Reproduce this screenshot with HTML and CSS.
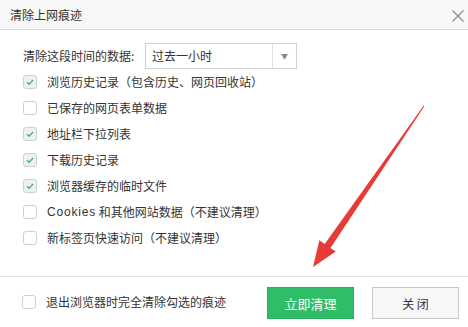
FILE: index.html
```html
<!DOCTYPE html>
<html lang="zh-CN">

<head>
    <meta charset="UTF-8">
    <meta name="viewport" content="width=device-width, initial-scale=1.0">
    <title>清除上网痕迹</title>
    <link rel="stylesheet" href="styles.css">
</head>

<body>
    <div class="dialog">
        <div class="titlebar">
            <span class="title">清除上网痕迹</span>
            <svg class="close" width="12" height="12" viewBox="0 0 12 12">
                <path d="M0.5 0.5 L11.5 11.5 M11.5 0.5 L0.5 11.5" stroke="#8a8a8a" stroke-width="1.1" fill="none"/>
            </svg>
        </div>

        <div class="content">
            <div class="range">
                <span class="range-label">清除这段时间的数据:</span>
                <div class="select">
                    <span class="select-text">过去一小时</span>
                    <span class="select-btn">▼</span>
                </div>
            </div>

            <div class="row"><span class="box checked"><svg viewBox="0 0 14 14"><path d="M3.5 7.2 L6 9.6 L10.6 4.6" /></svg></span>浏览历史记录（包含历史、网页回收站）</div>
            <div class="row"><span class="box"></span>已保存的网页表单数据</div>
            <div class="row"><span class="box checked"><svg viewBox="0 0 14 14"><path d="M3.5 7.2 L6 9.6 L10.6 4.6" /></svg></span>地址栏下拉列表</div>
            <div class="row"><span class="box checked"><svg viewBox="0 0 14 14"><path d="M3.5 7.2 L6 9.6 L10.6 4.6" /></svg></span>下载历史记录</div>
            <div class="row"><span class="box checked"><svg viewBox="0 0 14 14"><path d="M3.5 7.2 L6 9.6 L10.6 4.6" /></svg></span>浏览器缓存的临时文件</div>
            <div class="row"><span class="box"></span><span class="latin">Cookies</span>&nbsp;和其他网站数据（不建议清理）</div>
            <div class="row"><span class="box"></span>新标签页快速访问（不建议清理）</div>
        </div>

        <div class="footer">
            <div class="row exit"><span class="box"></span>退出浏览器时完全清除勾选的痕迹</div>
            <button class="btn primary">立即清理</button>
            <button class="btn">关&nbsp;闭</button>
        </div>

        <!-- annotation arrow drawn on top of the dialog -->
        <svg class="arrow" width="468" height="327" viewBox="0 0 468 327">
            <polygon points="424.4,106.3 423.6,105.7 324.7,243.9 319.4,240.2 313,267 335.8,251.6 330.5,247.9" fill="#e83a36"/>
        </svg>
    </div>
</body>

</html>
```

FILE: styles.css
```css
body {
    margin: 0;
    padding: 0;
    background: #fff;
    font-family: "Noto Sans CJK SC", "Liberation Sans", sans-serif;
    font-size: 12px;
    color: #333;
}

.dialog {
    position: relative;
    width: 468px;
    height: 327px;
    display: flex;
    flex-direction: column;
    overflow: hidden;
}

.titlebar {
    height: 29px;
    background-color: #f8f8f8;
    border-bottom: 1px solid #dcdcdc;
    display: flex;
    align-items: center;
    justify-content: space-between;
    padding: 0 4px 0 10px;
}

.title {
    font-size: 12px;
    color: #333;
    line-height: 29px;
}

.close {
    margin-top: 2px;
}

.content {
    flex: 1;
    padding: 13px 0 0 23px;
}

.range {
    display: flex;
    align-items: center;
    height: 26px;
}

.range-label {
    width: 122px;
    line-height: 26px;
}

.select {
    width: 150px;
    height: 24px;
    border: 1px solid #d0d0d0;
    display: flex;
    align-items: center;
}

.select-text {
    flex: 1;
    padding-left: 6px;
    line-height: 24px;
}

.select-btn {
    width: 23px;
    height: 24px;
    border-left: 1px solid #e2e2e2;
    color: #888;
    font-size: 7px;
    text-align: center;
    line-height: 24px;
}

.row {
    display: flex;
    align-items: center;
    height: 26px;
    line-height: 26px;
}

.box {
    width: 12px;
    height: 12px;
    border: 1px solid #cfcfcf;
    border-radius: 3px;
    background: #fff;
    margin-right: 10px;
    flex-shrink: 0;
}

.box.checked {
    background: #eef2ee;
}

.box svg {
    display: block;
    width: 12px;
    height: 12px;
}

.box svg path {
    fill: none;
    stroke: #49b36a;
    stroke-width: 1.6;
}

.latin {
    font-family: "Liberation Sans", sans-serif;
    letter-spacing: 0.8px;
}

.footer {
    height: 50px;
    border-top: 1px solid #e4e4e4;
    display: flex;
    align-items: center;
    padding: 0 9px 0 22px;
}

.exit {
    flex: 1;
}

.btn {
    width: 87px;
    height: 32px;
    border: 1px solid #c8c8c8;
    background: #f7f7f7;
    color: #333;
    font-family: "Noto Sans CJK SC", sans-serif;
    font-size: 12px;
    margin-left: 18px;
    padding: 0;
    margin-top: 2px;
}

.btn.primary {
    background-color: #2fbd68;
    border-color: #2aae5f;
    color: #fff;
    font-size: 13px;
}

.arrow {
    position: absolute;
    left: 0;
    top: 0;
    pointer-events: none;
}
```
